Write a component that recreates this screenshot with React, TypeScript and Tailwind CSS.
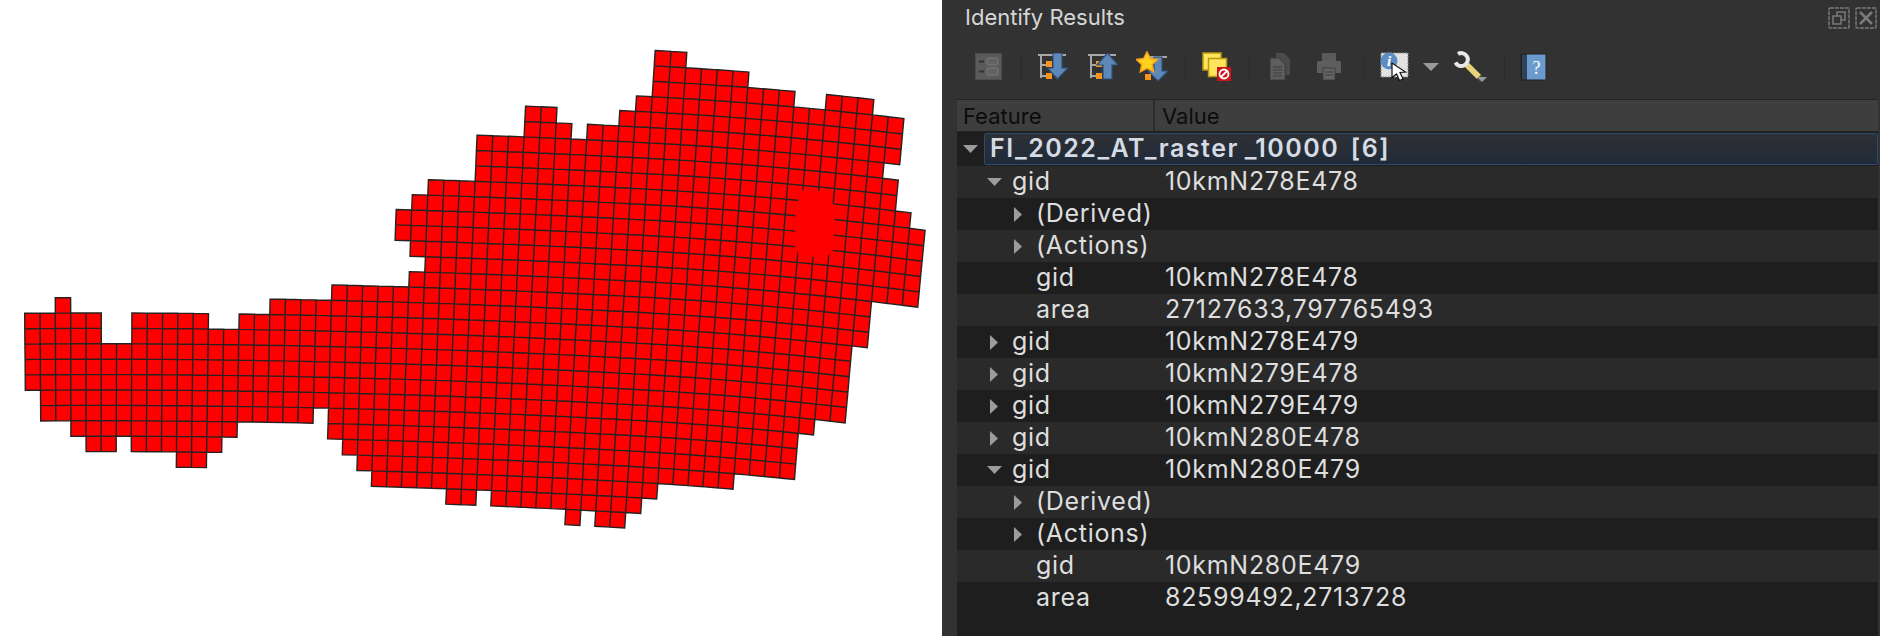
import React from "react";

// grid rows of the raster: [row, [fromCol, toCol], ...]
const SPANS: [number, number[][]][] = [
  [-18, [[40, 41]]],
  [-17, [[40, 45]]],
  [-16, [[40, 48], [51, 53]]],
  [-15, [[39, 55]]],
  [-14, [[32, 33], [38, 55]]],
  [-13, [[32, 34], [36, 55]]],
  [-12, [[29, 54]]],
  [-11, [[29, 55]]],
  [-10, [[29, 55]]],
  [-9, [[26, 56]]],
  [-8, [[25, 57]]],
  [-7, [[24, 57]]],
  [-6, [[24, 57]]],
  [-5, [[25, 57]]],
  [-4, [[26, 57]]],
  [-3, [[25, 54]]],
  [-2, [[20, 54]]],
  [-1, [[2, 2], [16, 54]]],
  [0, [[0, 4], [7, 11], [14, 53]]],
  [1, [[0, 4], [7, 53]]],
  [2, [[0, 53]]],
  [3, [[0, 53]]],
  [4, [[0, 53]]],
  [5, [[1, 51]]],
  [6, [[1, 18], [20, 50]]],
  [7, [[3, 13], [20, 50]]],
  [8, [[4, 5], [7, 12], [21, 50]]],
  [9, [[10, 11], [22, 46]]],
  [10, [[23, 41]]],
  [11, [[28, 29], [31, 40]]],
  [12, [[36, 36], [38, 39]]],
];

// grid is slightly curved in the map projection
function px(c: number, r: number) {
  const C = c - 5;
  const extra = Math.max(0, C - 35);
  const x = 24.7 + 15.32 * c - 0.0237 * C * r - 0.0038 * c * r;
  const y = 313 + 15.4 * r + 0.012 * C * C + 0.021 * extra * extra;
  return `${x.toFixed(1)} ${y.toFixed(1)}`;
}

function gridPath() {
  let d = "";
  for (const [r, spans] of SPANS) {
    for (const [a, b] of spans) {
      for (let c = a; c <= b; c++) {
        d += `M${px(c, r)}L${px(c + 1, r)}L${px(c + 1, r + 1)}L${px(c, r + 1)}Z`;
      }
    }
  }
  return d;
}

function RasterMap() {
  return (
    <svg width="942" height="636" viewBox="0 0 942 636" className="block">
      <path d={gridPath()} fill="#ff0000" stroke="#262222" strokeWidth="1.4" strokeLinejoin="miter" />
      {/* selected features painted without outlines */}
      <polygon
        points="796,206 802.7,189.500 819,190.700 835,205.700 833.300,250 827.300,256.700 811.700,256.700 799,255 794.700,247"
        fill="#ff0000"
      />
    </svg>
  );
}

function Sep({ ml }: { ml: string }) {
  return <div className={`${ml} h-[26px] w-px bg-[#2a2a2a]`} />;
}

function CollapseIcon() {
  return (
    <svg width="27" height="27" viewBox="0 0 27 27" className="ml-[33px]">
      <rect x="0.5" y="0.5" width="26" height="26" fill="#5a5a5a" stroke="#4c4c4c" />
      <rect x="12" y="5" width="11" height="7" rx="1" fill="#626262" stroke="#7a7a7a" />
      <rect x="12" y="15" width="11" height="7" rx="1" fill="#626262" stroke="#7a7a7a" />
      <path d="M4 8.5h5M4 18.5h5" stroke="#303030" strokeWidth="2" />
    </svg>
  );
}

function TreeLines() {
  return (
    <>
      <path d="M3 2v23M0 2h28M3 12h5M3 23h5" stroke="#a8a8a8" strokeWidth="2" fill="none" />
      <rect x="8" y="8" width="6" height="6" fill="#f7941d" />
      <rect x="8" y="20" width="6" height="6" fill="#f7941d" />
    </>
  );
}

function ExpandIcon() {
  return (
    <svg width="30" height="28" viewBox="0 0 30 28" className="ml-[16px]">
      <TreeLines />
      <path d="M15 0h9v15h6L19.5 26 9.5 15H15z" fill="#5d88b8" stroke="#2f4f78" strokeWidth="1.2" />
    </svg>
  );
}

function UpIcon() {
  return (
    <svg width="30" height="28" viewBox="0 0 30 28" className="ml-[20px]">
      <TreeLines />
      <path d="M15 26V12H9L19.5 0 30 12h-6v14z" fill="#5d88b8" stroke="#2f4f78" strokeWidth="1.2" />
    </svg>
  );
}

function StarIcon() {
  return (
    <svg width="32" height="32" viewBox="0 0 32 32" className="ml-[18px]">
      <path d="M12 6h19" stroke="#a8a8a8" strokeWidth="2" />
      <path d="M18 6h8v14h6L22 30 12 20h6z" fill="#5d88b8" stroke="#2f4f78" strokeWidth="1.2" />
      <rect x="9" y="23" width="6" height="6" fill="#f7941d" />
      <path
        d="M11 1l3.3 6.5 7.2 1-5.2 5 1.3 7.2L11 17.300 4.400 20.700l1.300-7.200-5.200-5 7.200-1z"
        fill="#ffd21e"
        stroke="#f7a01d"
        strokeWidth="1.600"
      />
    </svg>
  );
}

function DeselectIcon() {
  return (
    <svg width="30" height="30" viewBox="0 0 30 30" className="ml-[16px]">
      <rect x="1" y="1" width="18" height="17" fill="#ffe45c" stroke="#b89a10" strokeWidth="1.5" />
      <rect x="6.500" y="6.500" width="18" height="18" fill="#ffe45c" stroke="#b89a10" strokeWidth="1.5" />
      <rect x="15" y="15" width="14" height="14" fill="#c8141c" />
      <circle cx="22" cy="22" r="4.500" fill="none" stroke="#fff" strokeWidth="1.800" />
      <path d="M19 25l6-6" stroke="#fff" strokeWidth="1.800" />
    </svg>
  );
}

function DocIcon() {
  return (
    <svg width="20" height="27" viewBox="0 0 20 27" className="ml-[20px]">
      <path d="M6 0h8l6 6v16H6z" fill="#4b4b4b" />
      <path d="M0 5h9l6 6v16H0z" fill="#5e5e5e" stroke="#3c3c3c" />
      <path d="M3 14h9M3 17h9M3 20h9M3 23h9" stroke="#3c3c3c" />
    </svg>
  );
}

function PrintIcon() {
  return (
    <svg width="24" height="27" viewBox="0 0 24 27" className="ml-[27px]">
      <rect x="5" y="0" width="14" height="9" fill="#5a5a5a" />
      <path d="M2 8h20a2 2 0 012 2v10H0V10a2 2 0 012-2z" fill="#5e5e5e" />
      <rect x="6" y="15" width="12" height="12" fill="#646464" stroke="#3c3c3c" />
      <path d="M8 19h8M8 22h8" stroke="#3c3c3c" />
    </svg>
  );
}

function InfoIcon() {
  return (
    <svg width="30" height="30" viewBox="0 0 30 30" className="ml-[15px]">
      <rect x="1" y="1" width="27" height="24" fill="#e2e2e2" stroke="#8a8a8a" strokeDasharray="2 1" />
      <circle cx="9" cy="9" r="8.500" fill="#5e8dc4" />
      <text x="9" y="14" textAnchor="middle" fontSize="15" fontWeight="700" fontStyle="italic" fontFamily="Liberation Serif, serif" fill="#fff">
        i
      </text>
      <path d="M12 11l0 14.500 4.500-3.500 3 6.500 3.500-1.500-3-6.500 5.500-.5z" fill="#fff" stroke="#111" strokeWidth="1.200" />
    </svg>
  );
}

function DropIcon() {
  return (
    <svg width="16" height="8" viewBox="0 0 16 8" className="ml-[13px]">
      <path d="M0 0h16L8 8z" fill="#9a9a9a" />
    </svg>
  );
}

function WrenchIcon() {
  return (
    <svg width="36" height="32" viewBox="0 0 36 32" className="ml-[13px]">
      <path d="M15 14L27 26" stroke="#e8d27a" strokeWidth="6" />
      <path d="M27 26l3 3" stroke="#444" strokeWidth="6" />
      <path d="M6 3A6.500 6.500 0 1 1 3.500 11.500" fill="none" stroke="#e8e8e8" strokeWidth="4" />
      <path d="M25 26h10l-5 5z" fill="#9a9a9a" />
    </svg>
  );
}

function HelpIcon() {
  return (
    <svg width="27" height="28" viewBox="0 0 27 28" className="ml-[15px]">
      <rect x="0.500" y="0.500" width="26" height="27" rx="1" fill="#222" />
      <rect x="2" y="1.500" width="5" height="25" fill="#2e4358" />
      <rect x="7" y="1.500" width="18.500" height="25" fill="#6b9bcc" />
      <text x="16.500" y="21" textAnchor="middle" fontSize="18" fontFamily="Liberation Serif, serif" fill="#fff">
        ?
      </text>
    </svg>
  );
}

function DockButton({ close }: { close?: boolean }) {
  return (
    <svg width="22" height="22" viewBox="0 0 22 22">
      <rect x="1" y="1" width="20" height="20" rx="1" fill="none" stroke="#7a7a7a" strokeWidth="1.500" strokeDasharray="4 1" />
      {close ? (
        <path d="M5 5l12 12M17 5L5 17" stroke="#7a7a7a" strokeWidth="2.500" />
      ) : (
        <path d="M5 9h8v8H5zM9 9V5h8v8h-4" fill="none" stroke="#7a7a7a" strokeWidth="1.500" />
      )}
    </svg>
  );
}

type Row = { kind: "open" | "closed" | "sub" | "leaf"; name: string; value?: string };

const ROWS: Row[] = [
  { kind: "open", name: "gid", value: "10kmN278E478" },
  { kind: "sub", name: "(Derived)" },
  { kind: "sub", name: "(Actions)" },
  { kind: "leaf", name: "gid", value: "10kmN278E478" },
  { kind: "leaf", name: "area", value: "27127633,797765493" },
  { kind: "closed", name: "gid", value: "10kmN278E479" },
  { kind: "closed", name: "gid", value: "10kmN279E478" },
  { kind: "closed", name: "gid", value: "10kmN279E479" },
  { kind: "closed", name: "gid", value: "10kmN280E478" },
  { kind: "open", name: "gid", value: "10kmN280E479" },
  { kind: "sub", name: "(Derived)" },
  { kind: "sub", name: "(Actions)" },
  { kind: "leaf", name: "gid", value: "10kmN280E479" },
  { kind: "leaf", name: "area", value: "82599492,2713728" },
];

function ArrowDown({ className }: { className?: string }) {
  return (
    <svg width="15" height="8" viewBox="0 0 15 8" className={className}>
      <path d="M0 0h15L7.500 8z" fill="#9c9c9c" />
    </svg>
  );
}

function ArrowRight({ className }: { className?: string }) {
  return (
    <svg width="8" height="15" viewBox="0 0 8 15" className={className}>
      <path d="M0 0l8 7.500L0 15z" fill="#9c9c9c" />
    </svg>
  );
}

function TreeRow({ row, odd }: { row: Row; odd: boolean }) {
  return (
    <div className={`flex h-8 items-center ${odd ? "bg-[#2a2a2a]" : "bg-[#1e1e1e]"}`}>
      <div className="flex w-[208px] shrink-0 items-center">
        {row.kind === "open" && <ArrowDown className="ml-[30px] mr-[10px] shrink-0" />}
        {row.kind === "closed" && <ArrowRight className="ml-[33px] mr-[14px] shrink-0" />}
        {row.kind === "sub" && <ArrowRight className="ml-[57px] mr-[14px] shrink-0" />}
        {row.kind === "leaf" && <div className="w-[79px] shrink-0" />}
        <span>{row.name}</span>
      </div>
      <span>{row.value}</span>
    </div>
  );
}

export default function App() {
  return (
    <div className="flex h-[636px] w-[1880px] overflow-hidden bg-white font-['Inter',sans-serif]">
      <RasterMap />
      <div className="flex h-full w-[938px] flex-col bg-[#323232] pr-[2px]">
        <div className="flex h-[34px] shrink-0 items-center justify-between pl-[23px] pr-[1px]">
          <span className="text-[22px] text-[#d6d6d6]">Identify Results</span>
          <div className="flex items-center gap-[5px] pt-[1px]">
            <DockButton />
            <DockButton close />
          </div>
        </div>
        <div className="flex h-[65px] shrink-0 items-center">
          <CollapseIcon />
          <Sep ml="ml-[19px]" />
          <ExpandIcon />
          <UpIcon />
          <StarIcon />
          <Sep ml="ml-[17px]" />
          <DeselectIcon />
          <Sep ml="ml-[17px]" />
          <DocIcon />
          <PrintIcon />
          <Sep ml="ml-[23px]" />
          <InfoIcon />
          <DropIcon />
          <WrenchIcon />
          <Sep ml="ml-[16px]" />
          <HelpIcon />
        </div>
        <div className="ml-[15px] flex min-h-0 flex-1 flex-col bg-[#1e1e1e] text-[25px] tracking-[0.7px] text-[#dedede]">
          <div className="flex h-[33px] shrink-0 items-center border-y border-y-[#232323] bg-[#3e3e3e] text-[22px] tracking-normal text-[#0c0c0c]">
            <div className="h-full w-[198px] border-r-2 border-r-[#2c2c2c] pl-[6px] pt-[1px] leading-[31px]">Feature</div>
            <div className="pl-[7px] pt-[1px]">Value</div>
          </div>
          <div className="flex h-[34px] shrink-0 items-center bg-[#1e1e1e]">
            <ArrowDown className="ml-[6px] mr-[6px] shrink-0" />
            <div className="flex h-[32px] flex-1 items-center rounded-[2px] border border-[#2c4a70] bg-gradient-to-b from-[#2f3135] to-[#1f2a38] pl-[5px] font-semibold tracking-[1.5px] text-[#d5dbe5] [word-spacing:-2px]">
              <span className="whitespace-pre">FI_2022_AT_raster _10000  [6]</span>
            </div>
          </div>
          {ROWS.map((row, i) => (
            <TreeRow key={i} row={row} odd={i % 2 === 0} />
          ))}
        </div>
      </div>
    </div>
  );
}
